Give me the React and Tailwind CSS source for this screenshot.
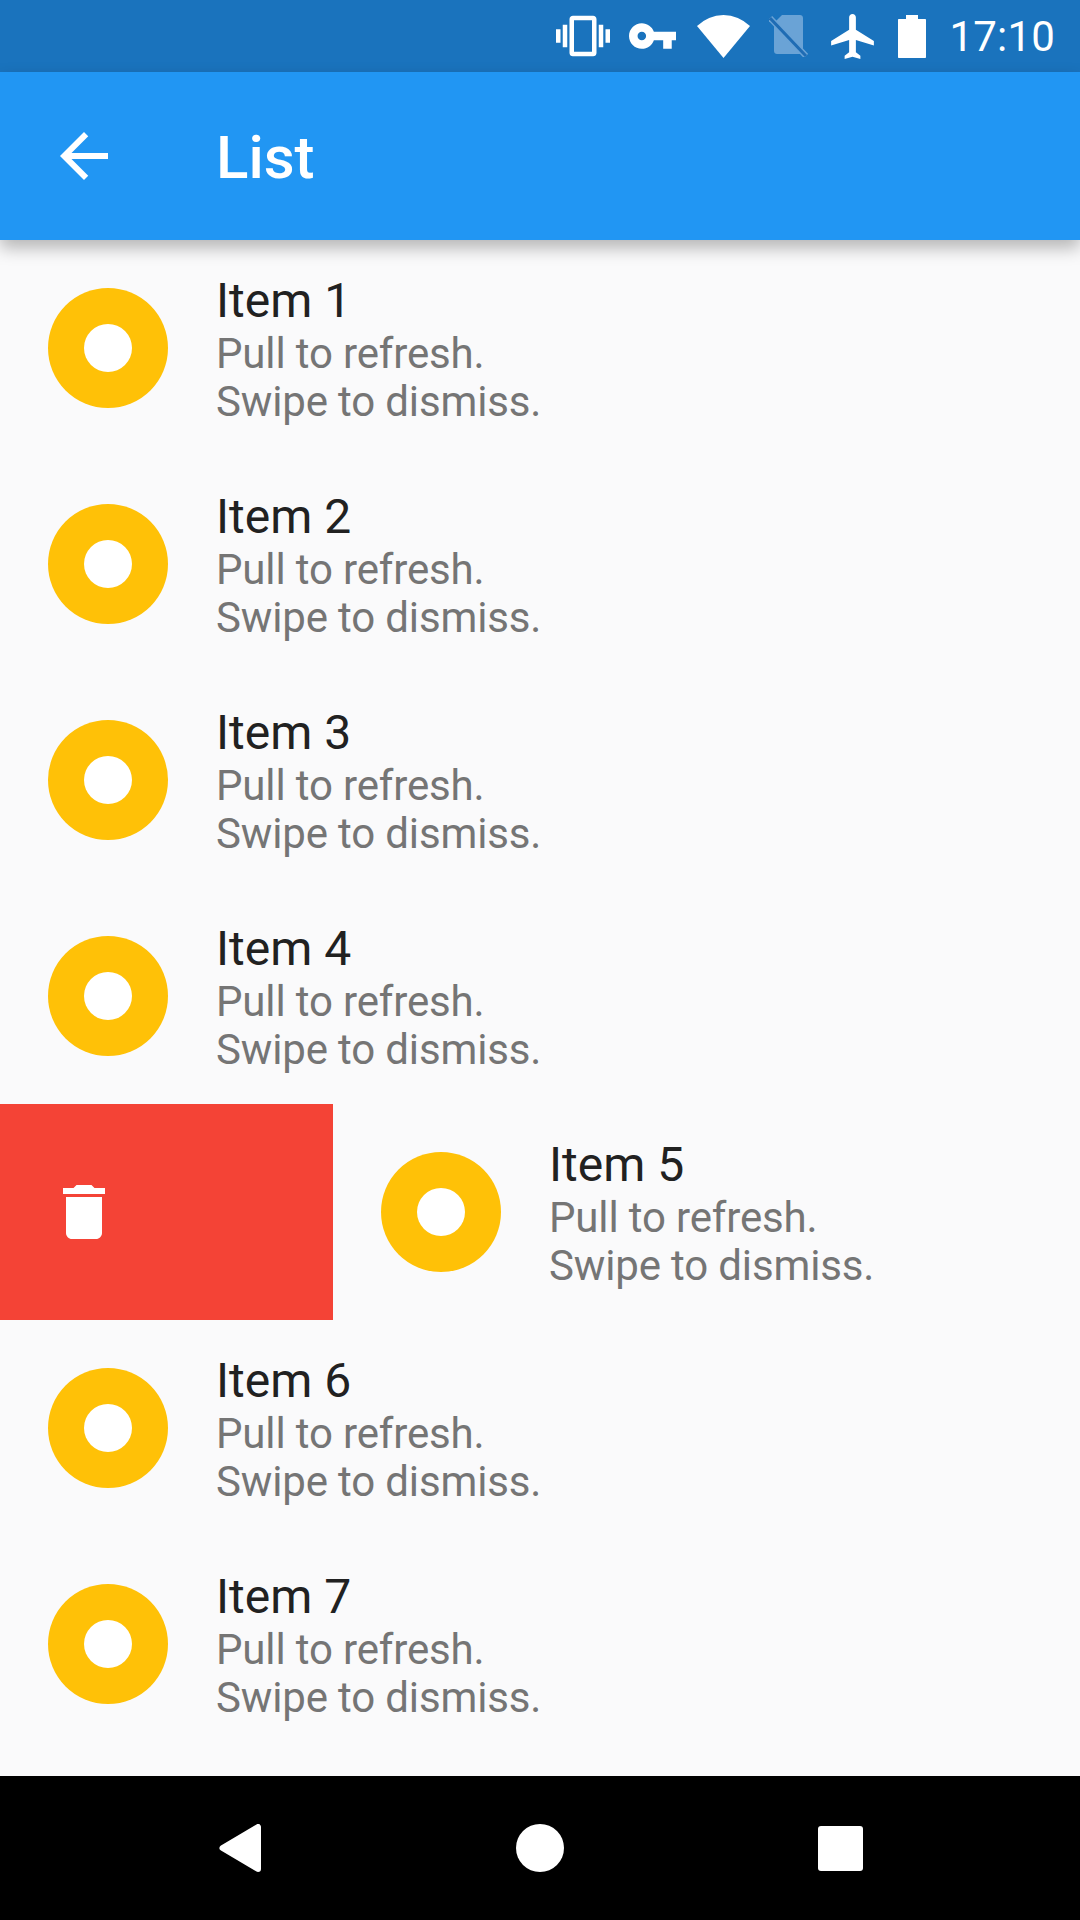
import React from 'react';

const ITEMS = [1, 2, 3, 4, 5, 6, 7];

const Icon = ({ d, className, viewBox = '0 0 24 24' }) => (
  <svg viewBox={viewBox} className={className} fill="currentColor">
    <path d={d} />
  </svg>
);

const StatusBar = () => (
  <div className="h-[72px] bg-[#1a73bd] flex items-center justify-end pr-[25px] text-white">
    <Icon
      className="w-[54px] h-[54px]"
      d="M0 15h2V9H0v6zm3 2h2V7H3v10zm19-8v6h2V9h-2zm-3 8h2V7h-2v10zM16.5 3h-9C6.67 3 6 3.67 6 4.5v15c0 .83.67 1.5 1.5 1.5h9c.83 0 1.5-.67 1.5-1.5v-15c0-.83-.67-1.5-1.5-1.5zM16 19H8V5h8v14z"
    />
    <Icon
      viewBox="1 6 22 12"
      className="w-[47px] h-[26px] ml-[19px]"
      d="M12.65 10C11.83 7.67 9.61 6 7 6c-3.31 0-6 2.69-6 6s2.69 6 6 6c2.61 0 4.83-1.67 5.65-4H17v4h4v-4h2v-4H12.65zM7 14c-1.1 0-2-.9-2-2s.9-2 2-2 2 .9 2 2-.9 2-2 2z"
    />
    <Icon
      viewBox="0 0 53 43"
      className="w-[53px] h-[43px] ml-[21px]"
      d="M26.5 43 L0 11 A37.5 37.5 0 0 1 53 11 Z"
    />
    {/* sim card with a slash, dimmed */}
    <svg viewBox="0 0 39 42" className="w-[39px] h-[42px] ml-[19px]">
      <path d="M13 0h18c1.7 0 3 1.3 3 3v33c0 1.7-1.3 3-3 3H8c-1.7 0-3-1.3-3-3V8z" fill="#6aa3d6" />
      <path d="M1 3 L37 41" stroke="#6aa3d6" strokeWidth="6" />
      <path d="M1 3 L37 41" stroke="#1f6cb4" strokeWidth="3" />
    </svg>
    <Icon
      viewBox="2 2 19 20"
      className="w-[43px] h-[45px] ml-[23px]"
      d="M21 16v-2l-8-5V3.5c0-.83-.67-1.5-1.5-1.5S10 2.67 10 3.5V9l-8 5v2l8-2.5V19l-2 1.5V22l3.5-1 3.5 1v-1.5L13 19v-5.5l8 2.5z"
    />
    <Icon
      viewBox="0 0 28 43"
      className="w-[28px] h-[43px] ml-[24px]"
      d="M8 4V0h12v4h7c.6 0 1 .4 1 1v37c0 .6-.4 1-1 1H1c-.6 0-1-.4-1-1V5c0-.6.4-1 1-1z"
    />
    <span className="ml-[23px] mt-[2px] text-[42px] tracking-[0.2px] leading-none">17:10</span>
  </div>
);

const AppBar = () => (
  <div className="relative z-10 h-[168px] bg-[#2196f3] flex items-center pl-[48px] text-white shadow-[0_8px_16px_rgba(0,0,0,0.28)]">
    <Icon
      className="w-[72px] h-[72px]"
      d="M20 11H7.83l5.59-5.59L12 4l-8 8 8 8 1.41-1.41L7.83 13H20v-2z"
    />
    <span className="ml-[96px] mt-[3px] text-[60px] font-medium leading-none">List</span>
  </div>
);

const ListRow = ({ n }) => (
  <div className="h-[216px] shrink-0 w-[1080px] flex items-center pl-[48px]">
    <div className="w-[120px] h-[120px] rounded-full bg-[#ffc107] flex items-center justify-center">
      <div className="w-[48px] h-[48px] rounded-full bg-white" />
    </div>
    <div className="ml-[48px] pt-[1px]">
      <div className="text-[48px] leading-[59px] text-[#212121]">Item {n}</div>
      <div className="text-[42px] leading-[48px] tracking-[-0.15px] text-[#757575]">Pull to refresh.</div>
      <div className="text-[42px] leading-[48px] tracking-[-0.15px] text-[#757575]">Swipe to dismiss.</div>
    </div>
  </div>
);

// row 5 is mid-swipe, the red dismiss panel pushes it to the right
const SwipedRow = ({ n }) => (
  <div className="flex h-[216px] overflow-hidden">
    <div className="w-[333px] shrink-0 bg-[#f44336] flex items-center pl-[48px] text-white">
      <Icon
        className="w-[72px] h-[72px]"
        d="M6 19c0 1.1.9 2 2 2h8c1.1 0 2-.9 2-2V7H6v12zM19 4h-3.5l-1-1h-5l-1 1H5v2h14V4z"
      />
    </div>
    <ListRow n={n} />
  </div>
);

const NavBar = () => (
  <div className="h-[144px] bg-black grid grid-cols-3 px-[90px] items-center justify-items-center text-white">
    <svg viewBox="0 0 42 48" className="w-[42px] h-[48px]">
      <polygon
        points="3.5,24 39,3 39,45"
        fill="currentColor"
        stroke="currentColor"
        strokeWidth="6"
        strokeLinejoin="round"
      />
    </svg>
    <div className="w-[48px] h-[48px] rounded-full bg-white" />
    <div className="w-[45px] h-[45px] rounded-[3px] bg-white" />
  </div>
);

const App = () => (
  <div className="w-[1080px] h-[1920px] flex flex-col bg-[#fafafb] overflow-hidden font-['Roboto',sans-serif]">
    <StatusBar />
    <AppBar />
    <div className="flex-1 overflow-hidden">
      {ITEMS.map((n) => (n === 5 ? <SwipedRow key={n} n={n} /> : <ListRow key={n} n={n} />))}
    </div>
    <NavBar />
  </div>
);

export default App;
